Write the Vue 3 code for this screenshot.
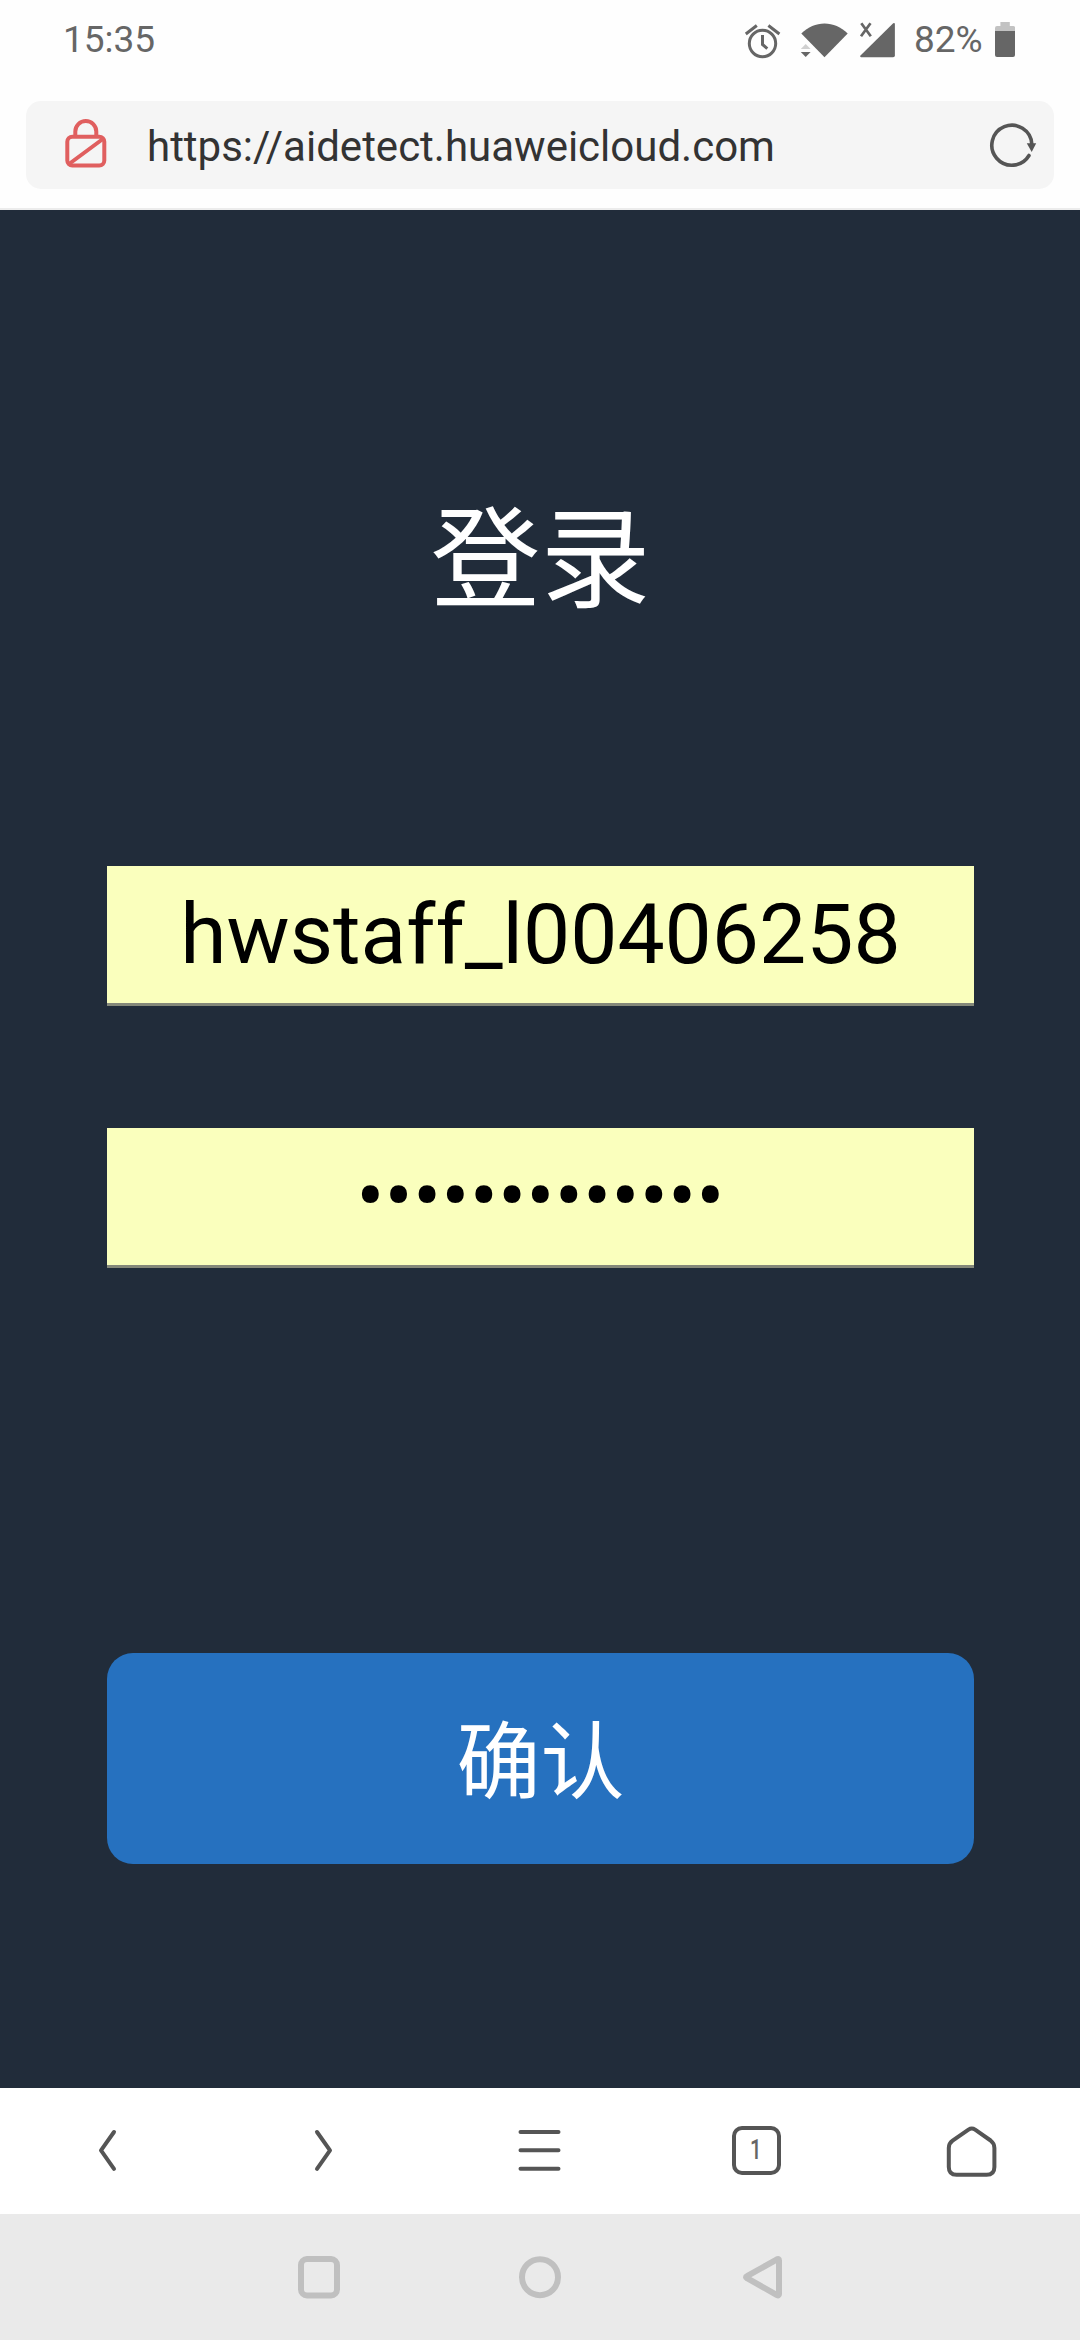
<script setup>
const time = '15:35'
const battery = '82%'
const url = 'https://aidetect.huaweicloud.com'
const username = 'hwstaff_l00406258'
const passwordMask = '•'.repeat(13)
</script>

<template>
  <div class="screen">
    <header class="status">
      <span class="time">{{ time }}</span>
      <div class="indicators">
        <svg class="alarm" width="38" height="40" viewBox="744 20 38 40" fill="none" stroke="#666" stroke-width="3">
          <circle cx="762.5" cy="43.5" r="13.2" />
          <path d="M762.5 35v9.5l4.8 4.2M745.8 34l11-8.5M779.4 34l-11-8.5" />
        </svg>
        <svg class="wifi" width="48" height="40" viewBox="800 20 48 40">
          <path d="M824.5 57.2L801.3 33.6C808 27 816 23.6 824.5 23.6S841 27 847.7 33.6Z" fill="#666" />
          <path d="M800.8 49l4.9-5 4.9 5z" fill="#d0d0d0" />
          <path d="M800.8 52h9.8l-4.9 5z" fill="#666" />
        </svg>
        <svg class="signal" width="38" height="40" viewBox="858 20 38 40">
          <path d="M861 57.2q-1.6-.5-.5-1.8L893.2 23.3q1.5-.9 1.7.7V55.4q0 1.8-1.8 1.8z" fill="#666" />
          <path d="M861.3 23.3l9.5 13M870.5 23.3l-9.5 13" fill="none" stroke="#666" stroke-width="2.7" />
        </svg>
        <span class="percent">{{ battery }}</span>
        <svg class="battery" width="20" height="40" viewBox="995 20 20 40">
          <path d="M1000.4 22h9.4v4h3.4q2 0 2 2v3.2H995V28q0-2 2-2h3.4z" fill="#c2c2c2" />
          <path d="M995 31h20v24q0 2-2 2h-16q-2 0-2-2z" fill="#666" />
        </svg>
      </div>
    </header>

    <div class="address-wrap">
      <div class="address">
        <svg class="lock" width="44" height="52" viewBox="64 117 44 52" fill="none" stroke="#e05f5f" stroke-width="4">
          <rect x="67.3" y="136.8" width="37" height="28.8" rx="5" />
          <path d="M75.3 136v-4.5a10.5 10.5 0 0 1 21 0v4.5M69 164l34.5-25.5" />
        </svg>
        <span class="url">{{ url }}</span>
        <svg class="reload" width="50" height="48" viewBox="987 121 50 48" fill="none">
          <path d="M1029 155.5A20 20 0 1 1 1031.8 144" stroke="#555" stroke-width="3.6" stroke-linecap="round" />
          <path d="M1026.8 143.3h9.4l-4.5 8.8z" fill="#555" />
        </svg>
      </div>
    </div>

    <main class="page">
      <h1 class="title">登录</h1>
      <div class="field username">{{ username }}</div>
      <div class="field password">{{ passwordMask }}</div>
      <button class="confirm" type="button">确认</button>
    </main>

    <nav class="toolbar">
      <div class="tool">
        <svg width="54" height="60" viewBox="81 2120 54 60" class="line"><path d="M114 2132l-13 18.3 13 18.5" /></svg>
      </div>
      <div class="tool">
        <svg width="54" height="60" viewBox="297 2120 54 60" class="line"><path d="M317 2132l13 18.3-13 18.5" /></svg>
      </div>
      <div class="tool">
        <svg width="54" height="60" viewBox="513 2120 54 60" class="line"><path d="M520.5 2132h38M520.5 2150.3h38M520.5 2168.7h38" /></svg>
      </div>
      <div class="tool"><span class="tabs"><span class="count">1</span></span></div>
      <div class="tool">
        <svg width="54" height="60" viewBox="945 2120 54 60" class="line"><path d="M968.5 2129.6q3.3-2.2 6.6 0L990.6 2140.5q3.8 2.9 3.8 7.5V2167q0 7.8-7.8 7.8h-30q-7.8 0-7.8-7.8v-19q0-4.6 3.8-7.3z" /></svg>
      </div>
    </nav>

    <nav class="system">
      <svg width="44" height="46" viewBox="0 0 44 46"><rect x="4" y="5" width="36" height="36.5" rx="6" /></svg>
      <svg width="44" height="46" viewBox="0 0 44 46"><circle cx="22" cy="23.2" r="18" /></svg>
      <svg width="44" height="46" viewBox="0 0 44 46"><path d="M38 5.3q2-.9 2 1.2v33.4q0 2.1-2 1.2L8 24.2q-2-1 0-2z" /></svg>
    </nav>
  </div>
</template>

<style>
body {
  margin: 0;
}
</style>

<style scoped>
.screen {
  width: 1080px;
  height: 2340px;
  display: flex;
  flex-direction: column;
  overflow: hidden;
  background: #fefefe;
  font-family: Roboto, "Noto Sans CJK SC", sans-serif;
}

svg {
  display: block;
  flex: none;
}

.status {
  height: 81px;
  padding: 20px 65px 0 63px;
  box-sizing: border-box;
  display: flex;
  justify-content: space-between;
  color: #666;
  font-size: 37px;
  line-height: 40px;
}

.indicators {
  display: flex;
}

.wifi {
  margin-left: 18px;
}

.signal {
  margin-left: 10px;
}

.percent {
  width: 80px;
  margin-left: 18px;
  margin-right: 1px;
}

.address-wrap {
  height: 129px;
  padding: 20px 26px 0;
  box-sizing: border-box;
  border-bottom: 2px solid #ececec;
}

.address {
  height: 88px;
  border-radius: 15px;
  background: #f5f5f5;
  display: flex;
  align-items: center;
}

.lock {
  margin: -4px 0 0 38px;
}

.url {
  margin: 3px 0 0 39px;
  font-size: 42px;
  line-height: 50px;
  color: #333;
}

.reload {
  margin-left: auto;
  margin-right: 17px;
}

.page {
  height: 1878px;
  padding: 0 106px 0 107px;
  box-sizing: border-box;
  display: flex;
  flex-direction: column;
  background: #212c3a;
  text-align: center;
}

.title {
  margin: 272px 0 0;
  height: 160px;
  font-size: 110px;
  line-height: 160px;
  font-weight: 400;
  color: #fff;
}

.field {
  height: 140px;
  box-sizing: border-box;
  border-bottom: 3px solid #84887a;
  background: #faffbd;
  color: #000;
  font-size: 84px;
  line-height: 137px;
  white-space: nowrap;
}

.username {
  margin-top: 224px;
}

.password {
  margin-top: 122px;
}

.confirm {
  margin-top: 385px;
  height: 211px;
  padding: 10px 0 0;
  border: 0;
  border-radius: 26px;
  background: #2671bf;
  color: #fff;
  font-family: inherit;
  font-size: 84px;
  line-height: 201px;
}

.toolbar {
  height: 126px;
  display: flex;
  background: #fff;
}

.tool {
  flex: 1;
  display: flex;
  justify-content: center;
  padding-top: 32px;
}

.line {
  fill: none;
  stroke: #555;
  stroke-width: 4;
  stroke-linecap: round;
  stroke-linejoin: round;
}

.tabs {
  width: 49px;
  height: 49px;
  margin-top: 6px;
  box-sizing: border-box;
  border: 4px solid #555;
  border-radius: 10px;
  color: #666;
  font-size: 27px;
  font-weight: 500;
  line-height: 41px;
  text-align: center;
}

.count {
  display: inline-block;
  transform: scaleX(0.75);
}

.system {
  height: 126px;
  display: flex;
  justify-content: center;
  align-items: center;
  gap: 177px;
  background: #eaeaea;
}

.system svg {
  fill: none;
  stroke: #c0c0c0;
  stroke-width: 6;
  stroke-linejoin: round;
}
</style>
